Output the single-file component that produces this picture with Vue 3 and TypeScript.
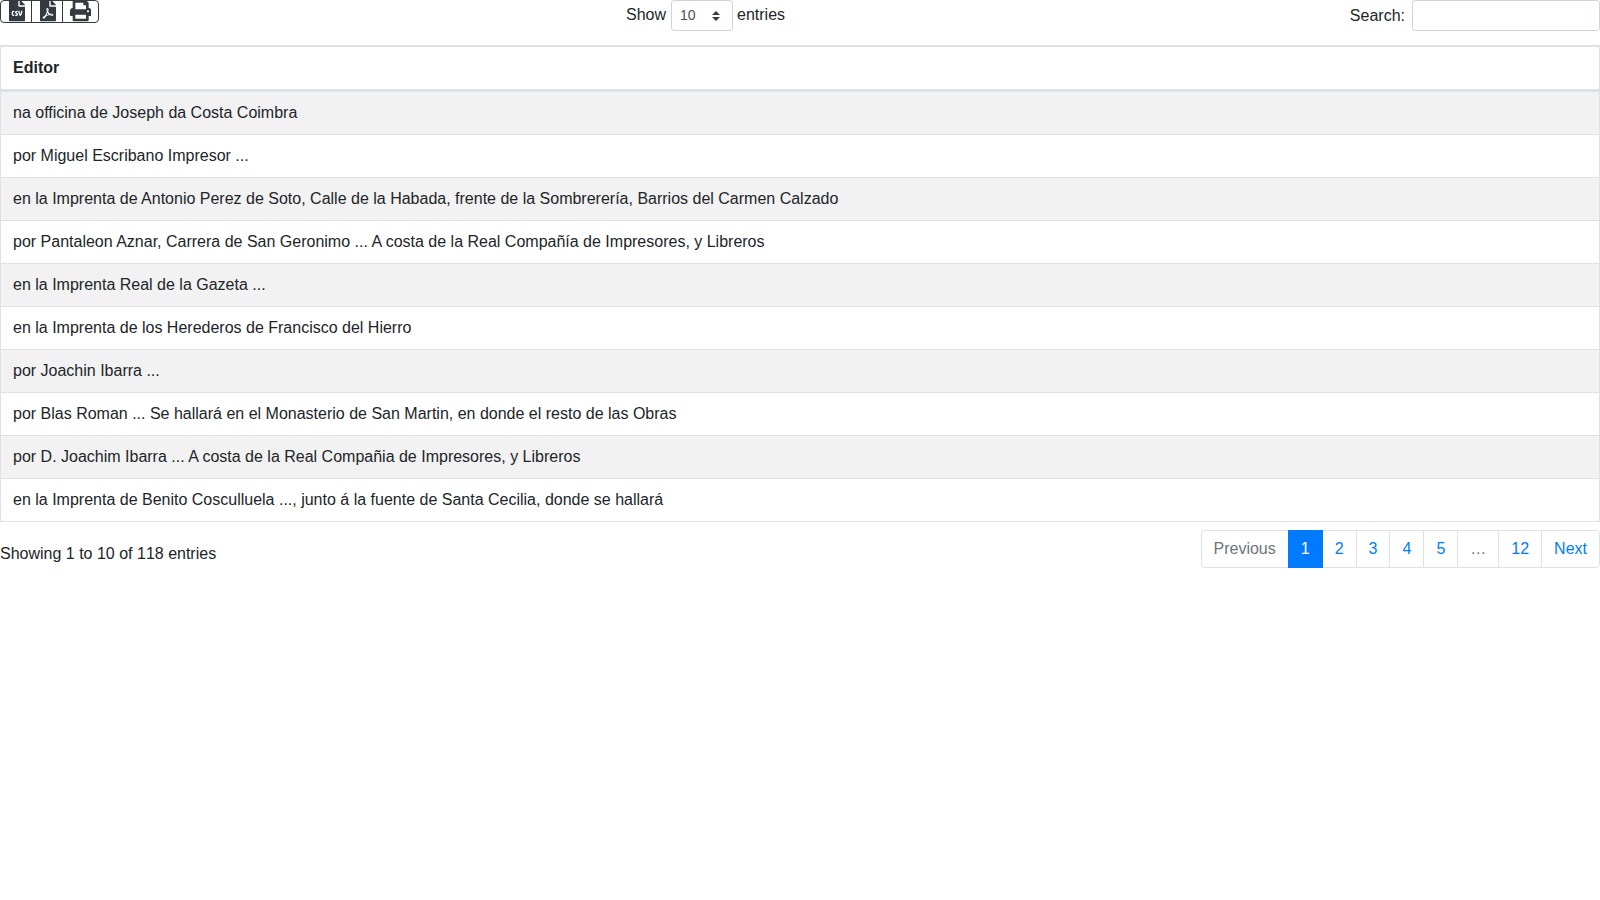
<script setup lang="ts">
const rows: string[] = [
  'na officina de Joseph da Costa Coimbra',
  'por Miguel Escribano Impresor ...',
  'en la Imprenta de Antonio Perez de Soto, Calle de la Habada, frente de la Sombrerería, Barrios del Carmen Calzado',
  'por Pantaleon Aznar, Carrera de San Geronimo ... A costa de la Real Compañía de Impresores, y Libreros',
  'en la Imprenta Real de la Gazeta ...',
  'en la Imprenta de los Herederos de Francisco del Hierro',
  'por Joachin Ibarra ...',
  'por Blas Roman ... Se hallará en el Monasterio de San Martin, en donde el resto de las Obras',
  'por D. Joachim Ibarra ... A costa de la Real Compañia de Impresores, y Libreros',
  'en la Imprenta de Benito Cosculluela ..., junto á la fuente de Santa Cecilia, donde se hallará',
]
const pages: string[] = ['2', '3', '4', '5']
</script>

<template>
  <div class="page">
    <div class="controls">
      <div class="buttons">
        <button class="btn" type="button" aria-label="CSV">
          <svg class="icon" viewBox="0 0 384 512"><path d="M224 136V0H24C10.7 0 0 10.7 0 24v464c0 13.3 10.7 24 24 24h336c13.3 0 24-10.7 24-24V160H248c-13.2 0-24-10.8-24-24zm-96 144c0 4.42-3.58 8-8 8h-8c-8.84 0-16 7.16-16 16v32c0 8.84 7.16 16 16 16h8c4.42 0 8 3.58 8 8v16c0 4.42-3.58 8-8 8h-8c-26.51 0-48-21.49-48-48v-32c0-26.51 21.49-48 48-48h8c4.42 0 8 3.58 8 8v16zm44.27 104H160c-4.42 0-8-3.58-8-8v-16c0-4.42 3.58-8 8-8h12.27c5.95 0 10.41-3.5 10.41-6.62 0-1.3-.75-2.66-2.12-3.84l-21.89-18.77c-8.47-7.22-13.33-17.48-13.33-28.14 0-21.3 19.02-38.62 42.41-38.62H200c4.42 0 8 3.58 8 8v16c0 4.42-3.58 8-8 8h-12.27c-5.95 0-10.41 3.5-10.41 6.62 0 1.3.75 2.66 2.12 3.84l21.89 18.77c8.47 7.22 13.33 17.48 13.33 28.14.01 21.29-19 38.62-42.39 38.62zM256 264v20.8c0 20.27 5.7 40.17 16 56.88 10.3-16.7 16-36.61 16-56.88V264c0-4.42 3.58-8 8-8h16c4.42 0 8 3.58 8 8v20.8c0 35.48-12.88 68.89-36.28 94.09-3.02 3.25-7.27 5.11-11.72 5.11s-8.7-1.86-11.72-5.11c-23.4-25.2-36.28-58.61-36.28-94.09V264c0-4.42 3.58-8 8-8h16c4.42 0 8 3.58 8 8zm121-159L279.1 7c-4.5-4.5-10.6-7-17-7H256v128h128v-6.1c0-6.3-2.5-12.4-7-16.9z"/></svg>
        </button>
        <button class="btn" type="button" aria-label="PDF">
          <svg class="icon" viewBox="0 0 384 512"><path d="M181.9 256.1c-5-16-4.9-46.9-2-46.9 8.4 0 7.6 36.9 2 46.9zm-1.7 47.2c-7.7 20.2-17.3 43.3-28.4 62.7 18.3-7 39-17.2 62.9-21.9-12.7-9.6-24.9-23.4-34.5-40.8zM86.1 428.1c0 .8 13.2-5.4 34.9-40.2-6.7 6.3-29.1 24.5-34.9 40.2zM248 160h136v328c0 13.3-10.7 24-24 24H24c-13.3 0-24-10.7-24-24V24C0 10.7 10.7 0 24 0h200v136c0 13.2 10.8 24 24 24zm-8 171.8c-20-12.2-33.3-29-42.7-53.8 4.5-18.5 11.6-46.6 6.2-64.2-4.7-29.4-42.4-26.5-47.8-6.8-5 18.3-.4 44.1 8.1 77-11.6 27.6-28.7 64.6-40.8 85.8-.1 0-.1.1-.2.1-27.1 13.9-73.6 44.5-54.5 68 5.6 6.9 16 10 21.5 10 17.9 0 35.7-18 61.1-61.8 25.8-8.5 54.1-19.1 79-23.2 21.7 11.8 47.1 19.5 64 19.5 29.2 0 31.2-32 19.7-43.4-13.9-13.6-54.3-9.7-73.6-7.2zM377 105L279 7c-4.5-4.5-10.6-7-17-7h-6v128h128v-6.1c0-6.3-2.5-12.4-7-16.9zm-74.1 255.3c4.1-2.7-2.5-11.9-42.8-9 37.1 15.8 42.8 9 42.8 9z"/></svg>
        </button>
        <button class="btn last" type="button" aria-label="Print">
          <svg class="icon" viewBox="0 0 512 512"><path d="M448 192V77.25c0-8.49-3.37-16.62-9.37-22.63L393.37 9.37c-6-6-14.14-9.37-22.63-9.37H96C78.33 0 64 14.33 64 32v160c-35.35 0-64 28.65-64 64v112c0 8.84 7.16 16 16 16h48v96c0 17.67 14.33 32 32 32h320c17.67 0 32-14.33 32-32v-96h48c8.84 0 16-7.16 16-16V256c0-35.35-28.65-64-64-64zm-64 256H128v-96h256v96zm0-224H128V64h192v48c0 8.84 7.16 16 16 16h48v96zm48 72c-13.25 0-24-10.75-24-24 0-13.26 10.75-24 24-24s24 10.74 24 24c0 13.25-10.75 24-24 24z"/></svg>
        </button>
      </div>
      <label class="length">
        <span class="show">Show</span>
        <select class="select"><option>10</option><option>25</option><option>50</option><option>100</option></select>
        <span class="entries">entries</span>
      </label>
      <label class="search">
        Search:
        <input class="input" type="search" />
      </label>
    </div>

    <table class="table">
      <thead>
        <tr><th>Editor</th></tr>
      </thead>
      <tbody>
        <tr v-for="row in rows" :key="row"><td>{{ row }}</td></tr>
      </tbody>
    </table>

    <div class="footer">
      <div class="info">Showing 1 to 10 of 118 entries</div>
      <ul class="pagination">
        <li class="item disabled"><a class="link">Previous</a></li>
        <li class="item active"><a class="link">1</a></li>
        <li v-for="p in pages" :key="p" class="item"><a class="link">{{ p }}</a></li>
        <li class="item disabled"><a class="link">…</a></li>
        <li class="item"><a class="link">12</a></li>
        <li class="item"><a class="link">Next</a></li>
      </ul>
    </div>
  </div>
</template>

<style>
html, body { margin: 0; background: #fff; }
</style>

<style scoped>
.page {
  font-family: "Liberation Sans", Arial, sans-serif;
  font-size: 16px;
  line-height: 24px;
  color: #212529;
}
.controls {
  display: grid;
  grid-template-columns: 99px 1fr 288px;
  align-items: start;
  height: 39px;
}
.buttons {
  display: flex;
  width: 99px;
  height: 23px;
  box-sizing: border-box;
  border: 1px solid #343a40;
  border-radius: 4px;
}
.btn {
  display: block;
  flex: none;
  box-sizing: content-box;
  width: 22px;
  height: 21px;
  padding: 0 0 0 8px;
  margin: 0;
  background: transparent;
  border: 0;
  border-right: 1px solid #343a40;
}
.btn.last {
  flex: 1;
  padding-left: 7px;
  border-right: 0;
}
.icon {
  display: block;
  height: 21.33px;
  width: auto;
  margin-top: -1px;
  fill: #343a40;
}
.length {
  justify-self: center;
  display: flex;
  align-items: center;
  height: 31px;
}
.show { margin-right: 5px; padding-bottom: 2px; }
.entries { margin-left: 4px; padding-bottom: 2px; }
.select {
  appearance: none;
  box-sizing: border-box;
  width: 62px;
  height: 31px;
  padding: 4px 24px 4px 8px;
  font: 14px/21px "Liberation Sans", Arial, sans-serif;
  color: #495057;
  background: #fff url("data:image/svg+xml,%3csvg xmlns='http://www.w3.org/2000/svg' width='4' height='5' viewBox='0 0 4 5'%3e%3cpath fill='%23343a40' d='M2 0L0 2h4zm0 5L0 3h4z'/%3e%3c/svg%3e") no-repeat right 12px center / 8px 10px;
  border: 1px solid #ced4da;
  border-radius: 3.2px;
}
.search {
  display: flex;
  justify-content: flex-end;
  align-items: center;
  gap: 7px;
  height: 31px;
}
.input {
  box-sizing: border-box;
  width: 188px;
  height: 31px;
  padding: 4px 8px;
  font: 14px/21px "Liberation Sans", Arial, sans-serif;
  color: #495057;
  background: #fff;
  border: 1px solid #ced4da;
  border-radius: 3.2px;
}
.table {
  box-sizing: border-box;
  width: 100%;
  margin: 6px 0;
  border-collapse: separate;
  border-spacing: 0;
  border: 1px solid #dee2e6;
  color: #212529;
}
.table th, .table td {
  padding: 9px 12px;
  text-align: left;
  vertical-align: top;
  border-top: 1px solid #dee2e6;
}
.table th {
  font-weight: 700;
  border-bottom: 2px solid #dee2e6;
}
.table tbody tr:nth-child(odd) { background: #f2f2f2; }
.footer {
  display: flex;
  justify-content: space-between;
  align-items: flex-start;
}
.info { padding-top: 13.6px; font-kerning: none; }
.pagination {
  display: flex;
  list-style: none;
  margin: 2px 0;
  padding: 0;
}
.link {
  display: block;
  padding: 8px 12px;
  margin-left: -1px;
  line-height: 20px;
  color: #007bff;
  background: #fff;
  border: 1px solid #dee2e6;
  cursor: pointer;
}
.item:first-child .link {
  margin-left: 0;
  border-radius: 4px 0 0 4px;
}
.item:last-child .link { border-radius: 0 4px 4px 0; }
.item.active .link {
  color: #fff;
  background: #007bff;
  border-color: #007bff;
  position: relative;
}
.item.disabled .link { color: #6c757d; cursor: default; }
</style>
